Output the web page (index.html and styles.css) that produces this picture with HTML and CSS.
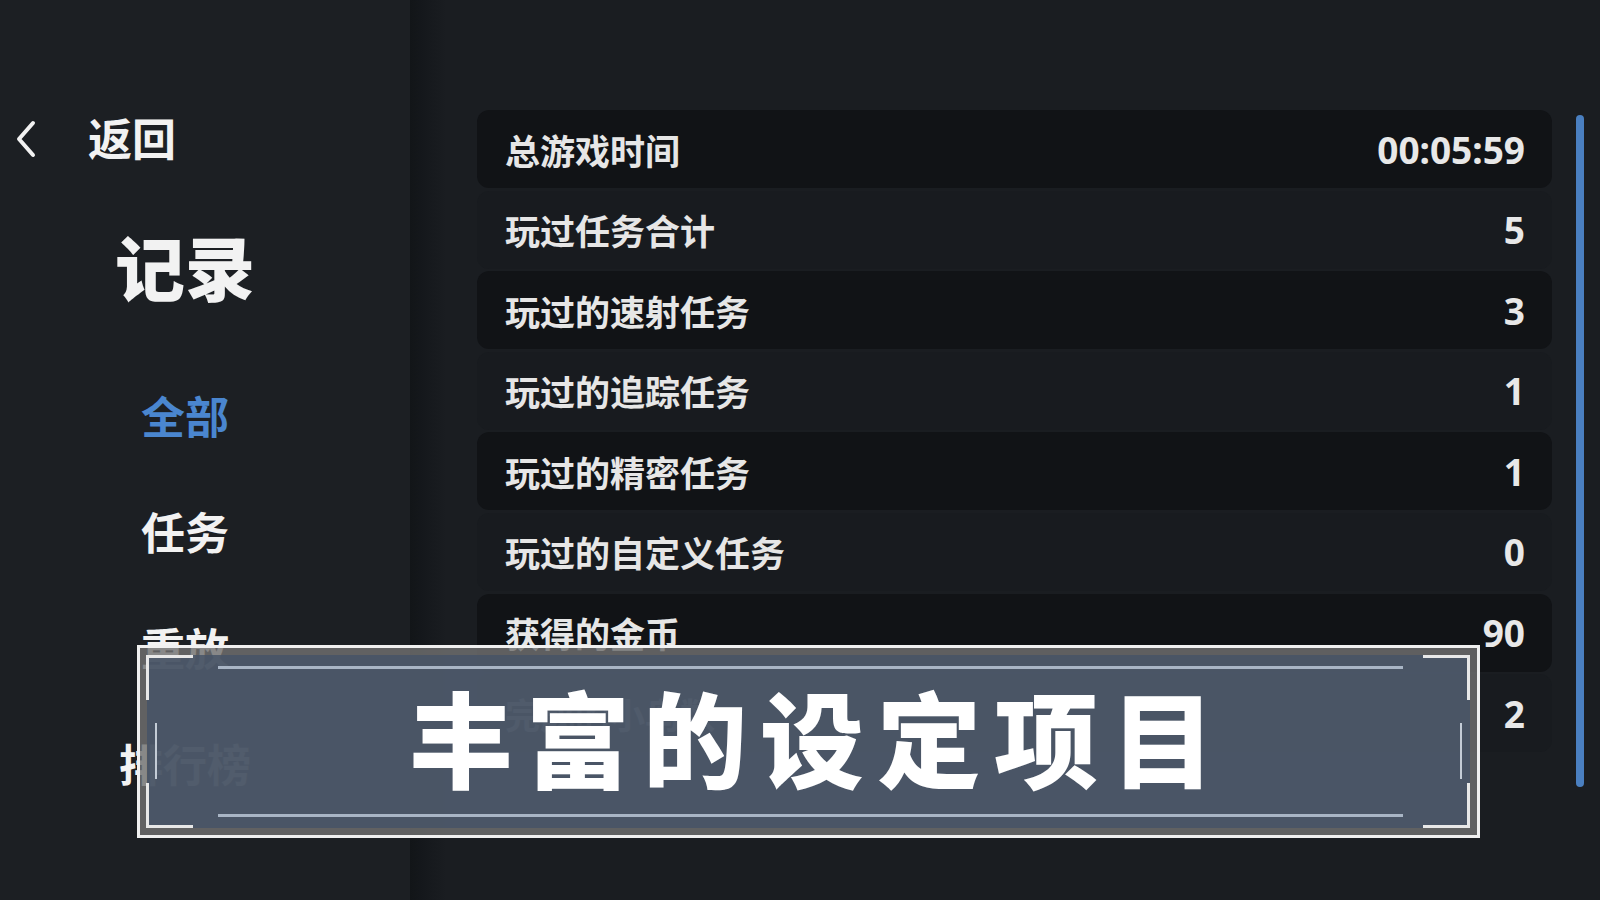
FILE: index.html
```html
<!DOCTYPE html>
<html lang="zh">
  <head>
    <meta charset="UTF-8" />
    <meta name="viewport" content="width=device-width, initial-scale=1.0" />
    <title>记录</title>
    <link rel="stylesheet" href="styles.css">
  </head>
  <body>
    <aside class="sidebar">
      <div class="back">
        <svg class="back-icon" width="24" height="38" viewBox="0 0 24 38">
          <polyline points="19,3 5,19 19,35" fill="none" stroke="#f2f2f2" stroke-width="4" stroke-linecap="round" stroke-linejoin="round" />
        </svg>
        <span class="back-label">返回</span>
      </div>
      <h1 class="title">记录</h1>
      <nav class="nav">
        <div class="nav-item active">全部</div>
        <div class="nav-item">任务</div>
        <div class="nav-item">重放</div>
        <div class="nav-item">排行榜</div>
      </nav>
    </aside>

    <main class="main">
      <div class="stats">
        <div class="row dark"><span class="label">总游戏时间</span><span class="value">00:05:59</span></div>
        <div class="row"><span class="label">玩过任务合计</span><span class="value">5</span></div>
        <div class="row dark"><span class="label">玩过的速射任务</span><span class="value">3</span></div>
        <div class="row"><span class="label">玩过的追踪任务</span><span class="value">1</span></div>
        <div class="row dark"><span class="label">玩过的精密任务</span><span class="value">1</span></div>
        <div class="row"><span class="label">玩过的自定义任务</span><span class="value">0</span></div>
        <div class="row dark"><span class="label">获得的金币</span><span class="value">90</span></div>
        <div class="row"><span class="label">完成的小鸟数</span><span class="value">2</span></div>
      </div>
      <div class="scrollbar"></div>
    </main>

    <div class="banner">
      <div class="banner-panel">
        <span class="line line-top"></span>
        <span class="line line-bottom"></span>
        <span class="corner tl"></span>
        <span class="corner tr"></span>
        <span class="corner bl"></span>
        <span class="corner br"></span>
        <span class="tick tick-left"></span>
        <span class="tick tick-right"></span>
        <div class="banner-text">丰富的设定项目</div>
      </div>
    </div>
  </body>
</html>
```

FILE: styles.css
```css
body {
  margin: 0;
  width: 1600px;
  height: 900px;
  display: flex;
  position: relative;
  overflow: hidden;
  background-color: #1a1d21;
  font-family: "Noto Sans CJK SC", "Noto Sans", sans-serif;
  color: #f2f2f2;
}
.sidebar {
  width: 410px;
  flex-shrink: 0;
  padding-top: 113px;
  box-sizing: border-box;
  background-color: #1c1f23;
}
.back {
  height: 48px;
  display: flex;
  align-items: center;
  padding-left: 14px;
}
.back-icon {
  display: block;
  margin-top: 3px;
}
.back-label {
  margin-left: 50px;
  font-size: 44px;
  font-weight: 700;
  line-height: 1;
}
.title {
  width: 370px;
  height: 80px;
  margin: 65px 0 0;
  display: flex;
  align-items: center;
  justify-content: center;
  font-size: 70px;
  font-weight: 900;
  line-height: 1;
}
.nav {
  width: 370px;
  margin-top: 51px;
}
.nav-item {
  height: 116px;
  display: flex;
  align-items: center;
  justify-content: center;
  font-size: 44px;
  font-weight: 700;
  line-height: 1;
}
.nav-item.active {
  color: #4a86cf;
}
.main {
  flex: 1;
  display: flex;
  gap: 24px;
  padding: 110px 16px 0 67px;
  background: linear-gradient(to right, #121518 0, #15181c 14px, #1a1d21 36px);
}
.stats {
  flex: 1;
  display: flex;
  flex-direction: column;
  gap: 2.6px;
}
.row {
  height: 78px;
  flex-shrink: 0;
  display: flex;
  align-items: center;
  justify-content: space-between;
  padding: 0 27px 0 28px;
  border-radius: 12px;
  background-color: #181b1f;
}
.row.dark {
  background-color: #111316;
}
.label {
  font-size: 35px;
  font-weight: 700;
  color: #e6e6e6;
  line-height: 1;
}
.value {
  font-family: "Noto Sans", sans-serif;
  font-size: 37px;
  font-weight: 700;
  color: #e8e8e8;
  line-height: 1;
}
.scrollbar {
  width: 8px;
  height: 672px;
  margin-top: 5px;
  border-radius: 4px;
  background-color: #4a7fc0;
}
.banner {
  position: absolute;
  left: 137px;
  top: 645px;
  width: 1343px;
  height: 193px;
  box-sizing: border-box;
  border: 3px solid #f0f0f0;
  padding: 7px;
  background-color: rgba(112, 112, 112, 0.82);
}
.banner-panel {
  position: relative;
  height: 100%;
  display: flex;
  align-items: center;
  justify-content: center;
  background-color: rgba(70, 84, 102, 0.84);
}
.banner-text {
  font-size: 104px;
  font-weight: 900;
  letter-spacing: 13px;
  line-height: 1;
  color: #ffffff;
  padding: 0 0 12px 20px;
}
.line {
  position: absolute;
  left: 71px;
  right: 67px;
  height: 3px;
  background-color: #a9b5c5;
}
.line-top {
  top: 11px;
}
.line-bottom {
  bottom: 11px;
}
.corner {
  position: absolute;
  width: 44px;
  height: 42px;
  border: 0 solid #e8e8e8;
}
.corner.tl {
  left: -1px;
  top: 0;
  border-left-width: 3px;
  border-top-width: 3px;
}
.corner.tr {
  right: 0;
  top: 0;
  border-right-width: 3px;
  border-top-width: 3px;
}
.corner.bl {
  left: -1px;
  bottom: 0;
  border-left-width: 3px;
  border-bottom-width: 3px;
}
.corner.br {
  right: 0;
  bottom: 0;
  border-right-width: 3px;
  border-bottom-width: 3px;
}
.tick {
  position: absolute;
  width: 2px;
  height: 56px;
  top: 68px;
  background-color: #c4ccd6;
}
.tick-left {
  left: 8px;
}
.tick-right {
  right: 8px;
}
```
